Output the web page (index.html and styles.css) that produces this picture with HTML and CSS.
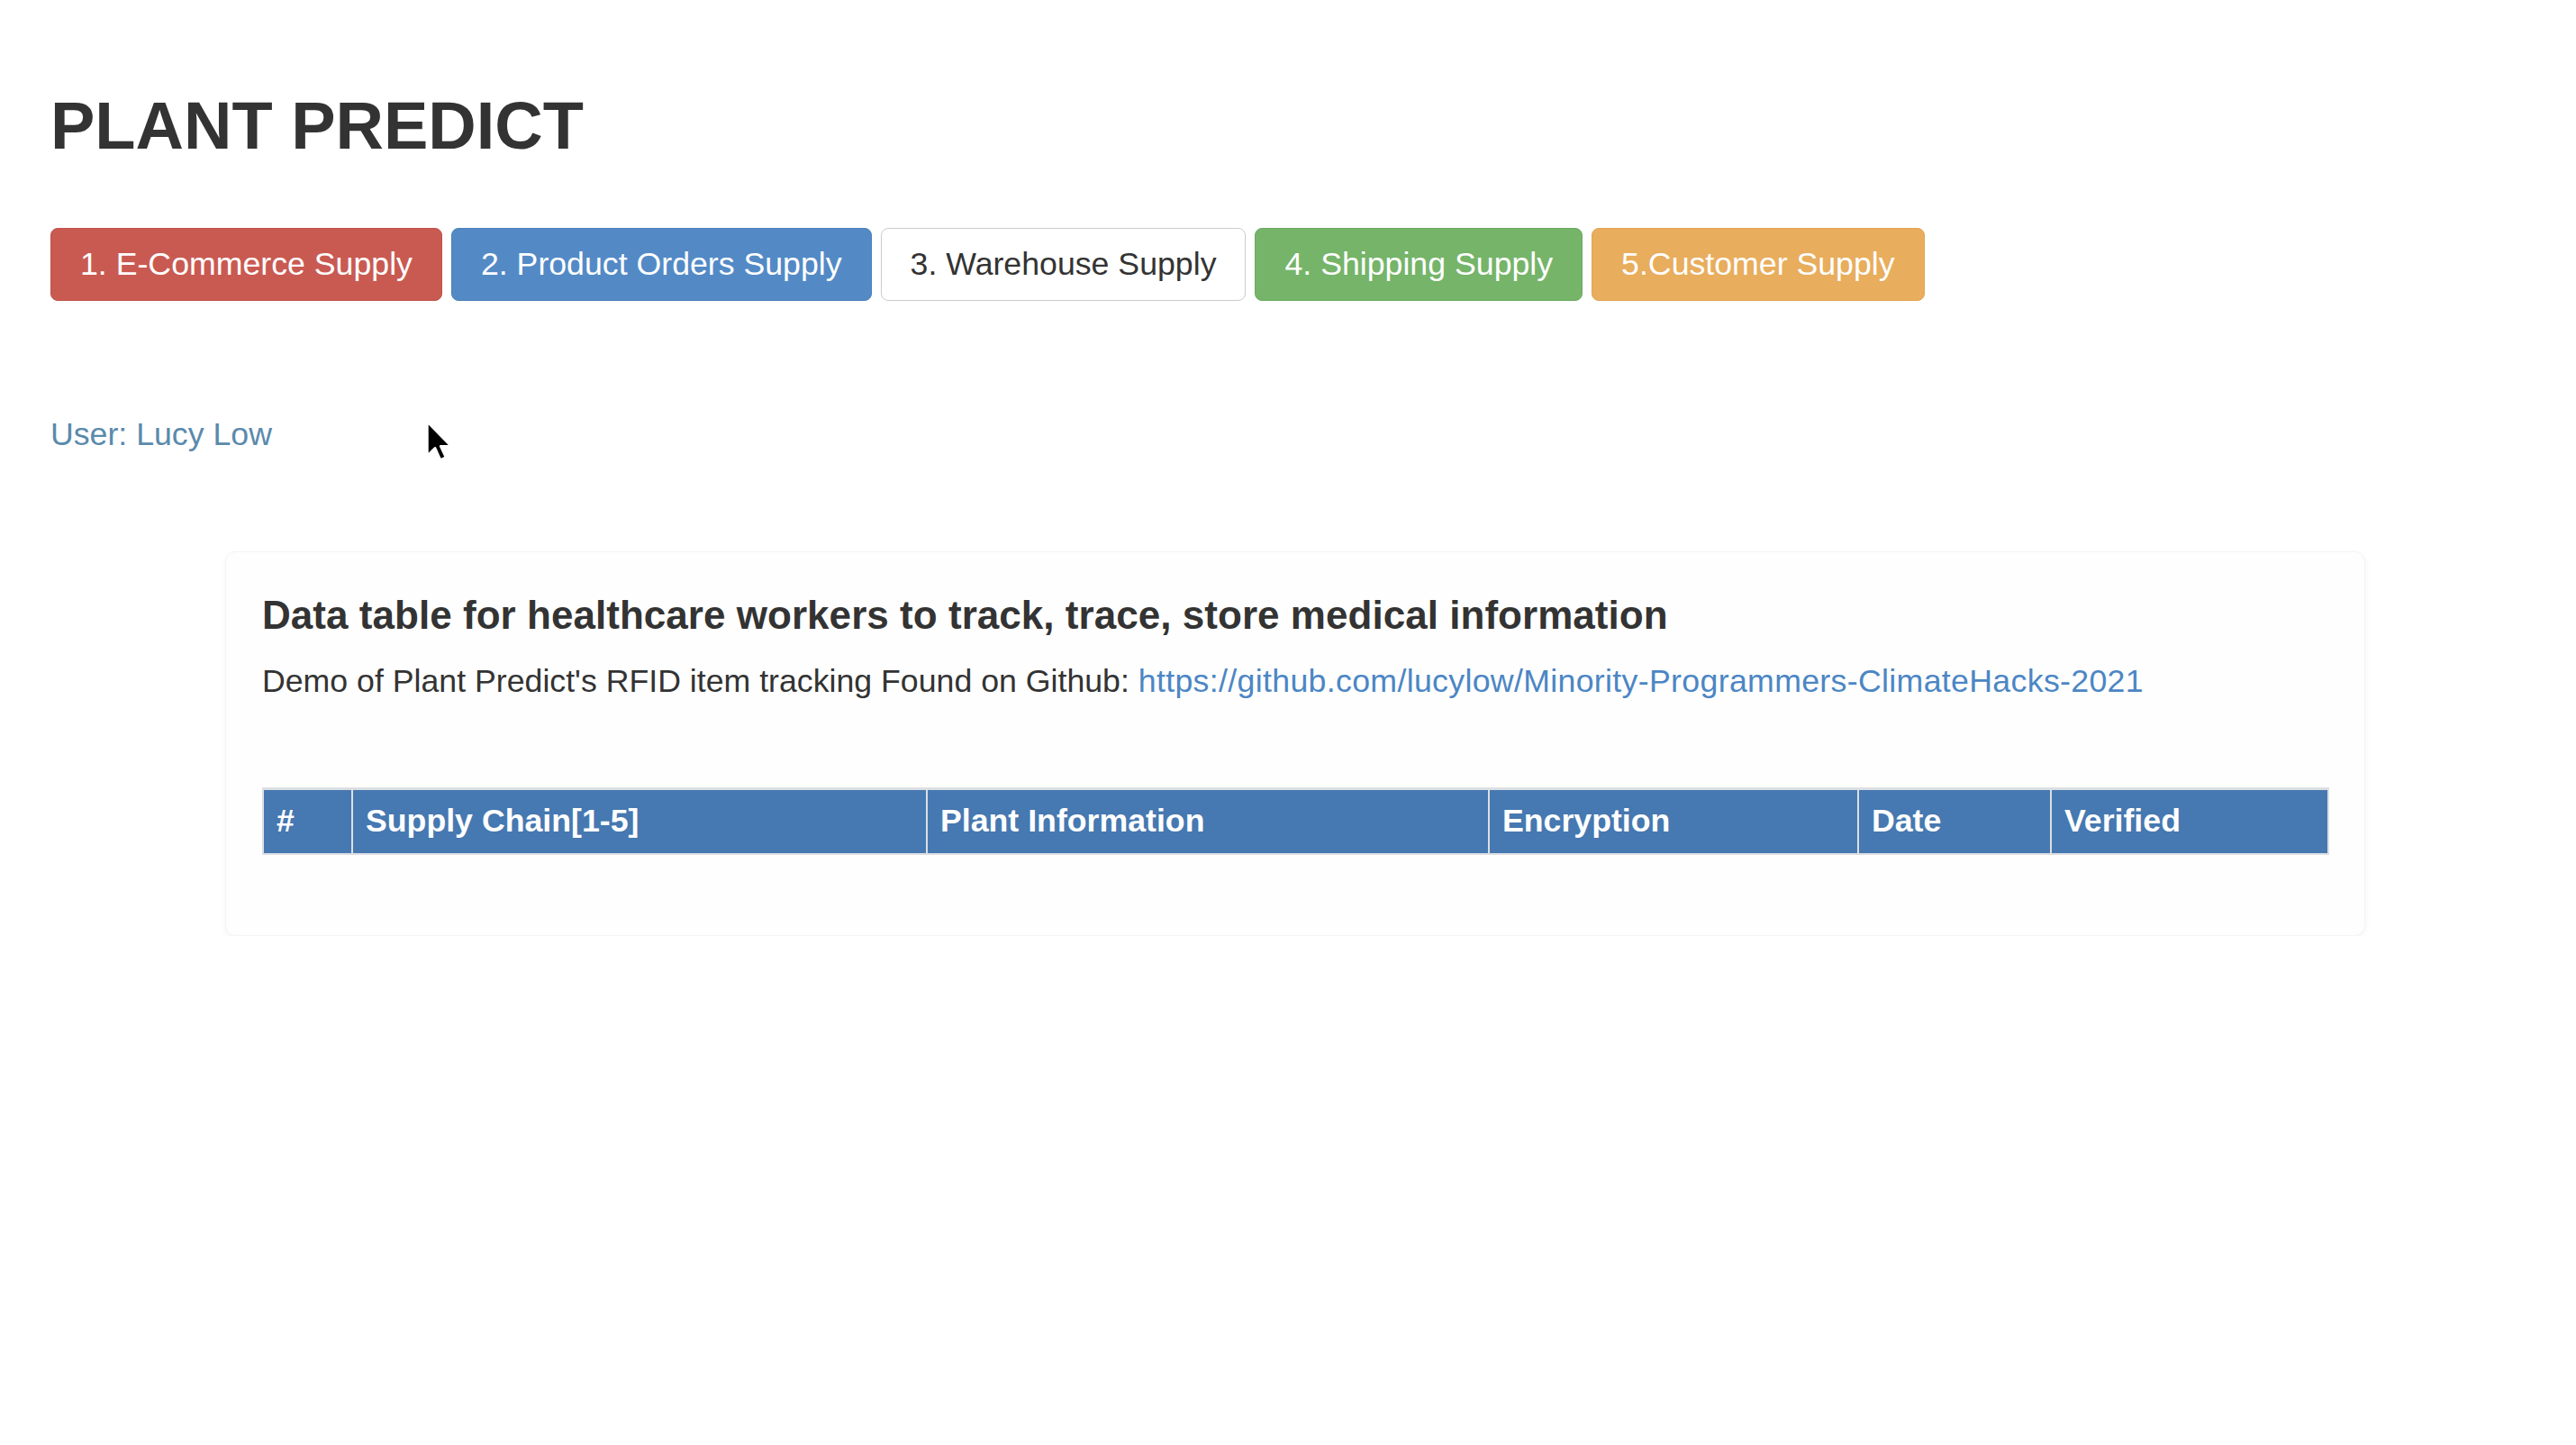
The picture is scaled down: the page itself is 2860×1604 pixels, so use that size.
FILE: index.html
```html
<!DOCTYPE html>
<html lang="en">
<head>
<meta charset="utf-8">
<title>Plant Predict</title>
<link rel="stylesheet" href="styles.css">
</head>
<body>
<div class="page">
  <h1 class="title">PLANT PREDICT</h1>
  <div class="btn-row">
    <a class="btn btn-red">1. E-Commerce Supply</a>
    <a class="btn btn-blue">2. Product Orders Supply</a>
    <a class="btn btn-white">3. Warehouse Supply</a>
    <a class="btn btn-green">4. Shipping Supply</a>
    <a class="btn btn-orange">5.Customer Supply</a>
  </div>
  <div class="user">User: Lucy Low</div>
  <div class="card">
    <h3 class="card-title">Data table for healthcare workers to track, trace, store medical information</h3>
    <p class="card-text">Demo of Plant Predict's RFID item tracking Found on Github: <a class="link" href="#">https://github.com/lucylow/Minority-Programmers-ClimateHacks-2021</a></p>
    <table class="data">
      <colgroup>
        <col class="c1"><col class="c2"><col class="c3"><col class="c4"><col class="c5"><col class="c6">
      </colgroup>
      <thead>
        <tr>
          <th>#</th>
          <th>Supply Chain[1-5]</th>
          <th>Plant Information</th>
          <th>Encryption</th>
          <th>Date</th>
          <th>Verified</th>
        </tr>
      </thead>
    </table>
  </div>
  <svg class="cursor" width="32" height="48" viewBox="0 0 20 30" aria-hidden="true">
    <path d="M1 1 L1 24 L6.3 18.8 L10 27 L13.6 25.4 L10 17.6 L17.2 17.6 Z" fill="#000" stroke="#fff" stroke-width="1.4" stroke-linejoin="round"/>
  </svg>
</div>
</body>
</html>
```

FILE: styles.css
```css
html, body {
  margin: 0;
  padding: 0;
  background: #ffffff;
}

body {
  font-family: "Liberation Sans", Arial, Helvetica, sans-serif;
  font-size: 35.7px;
  line-height: 1.42857;
  color: #333333;
}

.page {
  position: relative;
  padding: 99px 0 0 56px;
}

.title {
  margin: 0;
  font-size: 74px;
  line-height: 1.1;
  font-weight: 700;
  color: #333333;
  letter-spacing: 0;
}

.btn-row {
  display: flex;
  gap: 10px;
  margin-top: 73px;
}

.btn {
  display: flex;
  align-items: center;
  box-sizing: border-box;
  height: 81px;
  padding: 0 32px;
  border: 1px solid transparent;
  border-radius: 8px;
  color: #ffffff;
  text-decoration: none;
  white-space: nowrap;
}

.btn-red {
  background: #c95a52;
  border-color: #c0514a;
}

.btn-blue {
  background: #538ac6;
  border-color: #4a80bb;
}

.btn-white {
  background: #ffffff;
  border-color: #cccccc;
  color: #333333;
}

.btn-green {
  background: #75b469;
  border-color: #6bab60;
}

.btn-orange {
  background: #e8ad5d;
  border-color: #e2a451;
}

.user {
  margin-top: 123px;
  color: #5a8aac;
}

.card {
  box-sizing: border-box;
  width: 2376px;
  margin: 104px 0 0 194px;
  padding: 46px 42px 89px 40px;
  background: #fefefe;
  border: 1px solid #f4f4f4;
  border-radius: 12px;
  box-shadow: 0 2px 6px rgba(0, 0, 0, 0.05);
}

.card-title {
  margin: 0;
  font-size: 44px;
  line-height: 1.1;
  font-weight: 700;
  color: #333333;
  letter-spacing: 0.04px;
}

.card-text {
  margin: 23px 0 0 0;
}

.link {
  color: #4c86c4;
  text-decoration: none;
  letter-spacing: 0.33px;
}

.data {
  width: 2293px;
  margin-top: 92px;
  border-collapse: collapse;
  table-layout: fixed;
}

.c1 { width: 99px; }
.c2 { width: 638px; }
.c3 { width: 624px; }
.c4 { width: 410px; }
.c5 { width: 214px; }
.c6 { width: 308px; }

.data th {
  background: #4678b1;
  color: #ffffff;
  font-weight: 700;
  text-align: left;
  padding: 9px 14px 10px 14px;
  border: 2px solid #dcdfe3;
  border-top-width: 3px;
  white-space: nowrap;
}

.cursor {
  position: absolute;
  left: 473px;
  top: 467px;
}
```
